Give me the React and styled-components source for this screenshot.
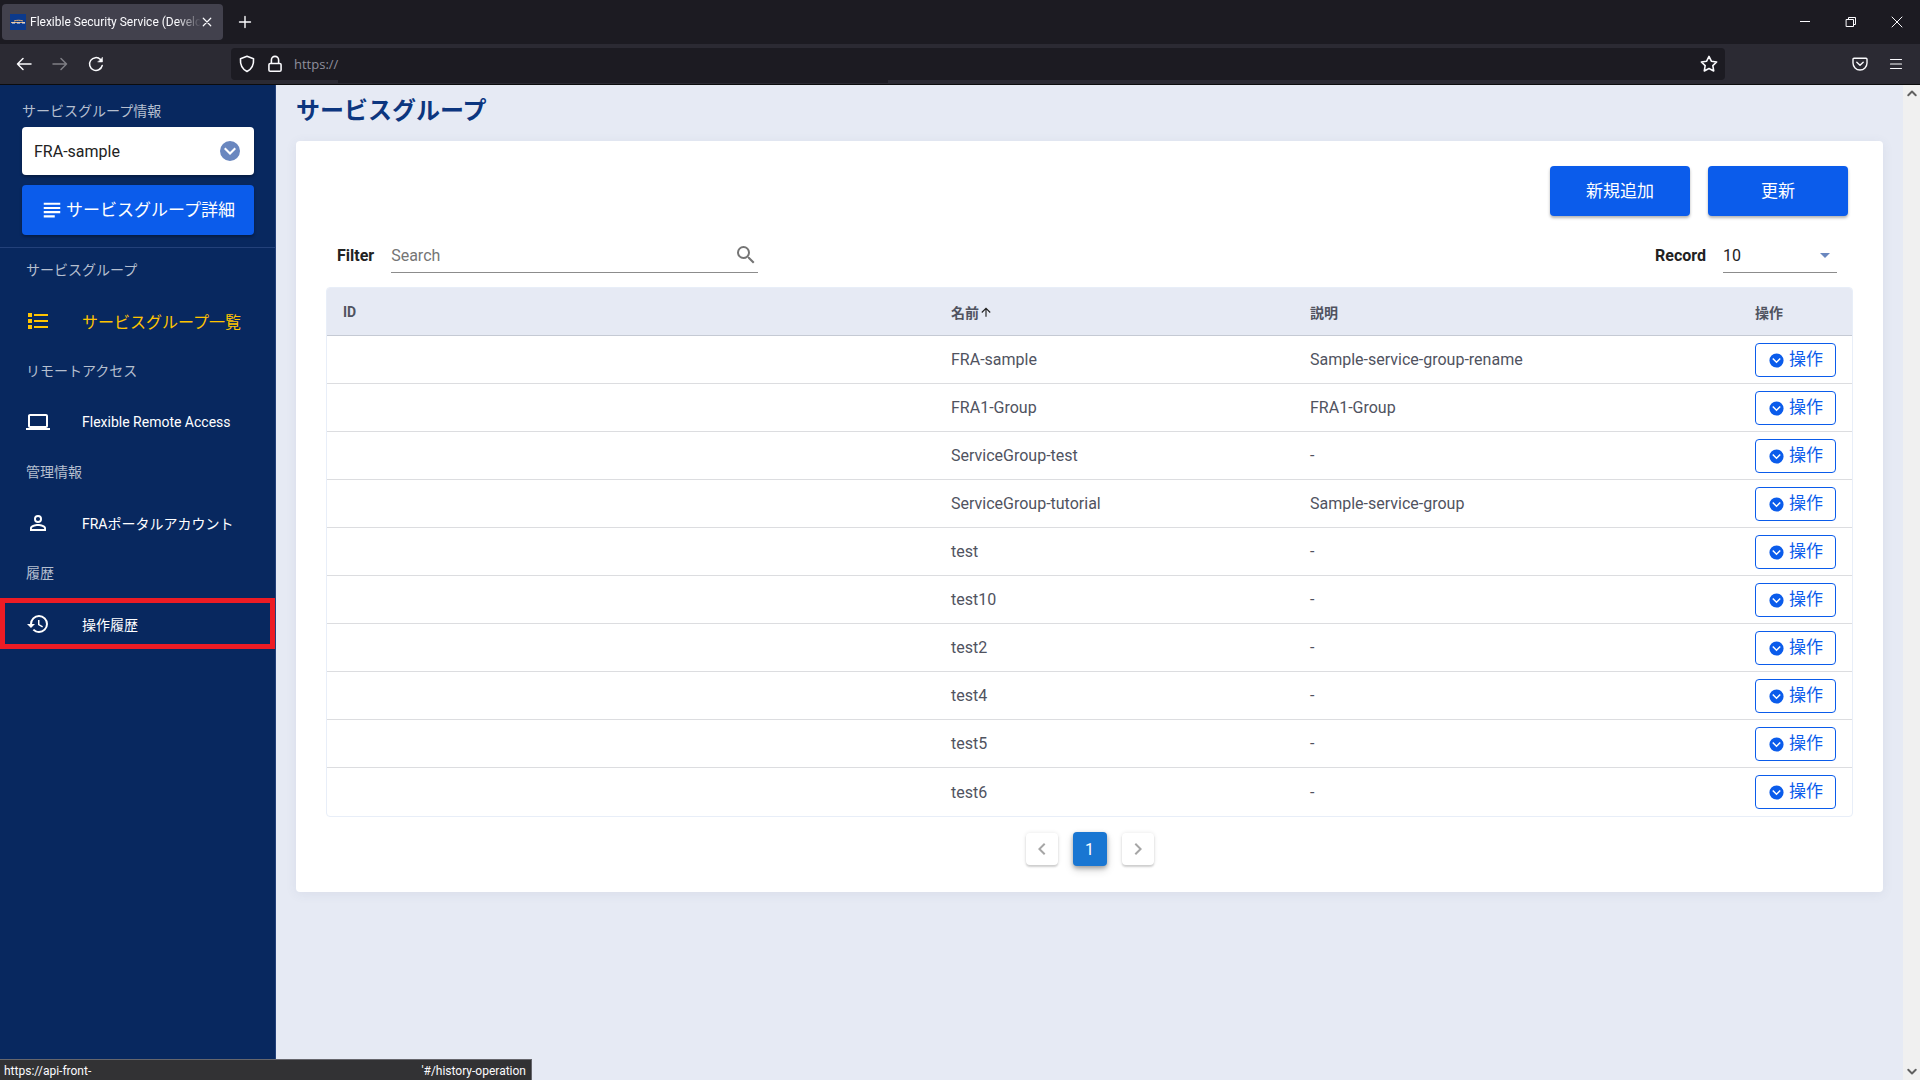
import { useState } from "react";
import styled, { createGlobalStyle } from "styled-components";

const services = [
  { name: "FRA-sample", description: "Sample-service-group-rename" },
  { name: "FRA1-Group", description: "FRA1-Group" },
  { name: "ServiceGroup-test", description: "-" },
  { name: "ServiceGroup-tutorial", description: "Sample-service-group" },
  { name: "test", description: "-" },
  { name: "test10", description: "-" },
  { name: "test2", description: "-" },
  { name: "test4", description: "-" },
  { name: "test5", description: "-" },
  { name: "test6", description: "-" },
];

const menu = [
  { heading: "サービスグループ", label: "サービスグループ一覧", icon: "list", active: true },
  { heading: "リモートアクセス", label: "Flexible Remote Access", icon: "laptop" },
  { heading: "管理情報", label: "FRAポータルアカウント", icon: "account" },
  { heading: "履歴", label: "操作履歴", icon: "history", marked: true },
];

const icons = {
  list: "M2 4h4v4H2V4zm6 1h14v2H8V5zM2 10h4v4H2v-4zm6 1h14v2H8v-2zm-6 5h4v4H2v-4zm6 1h14v2H8v-2z",
  laptop:
    "M4 6h16v10H4V6zm16 12c1.1 0 2-.9 2-2V6c0-1.1-.9-2-2-2H4c-1.1 0-2 .9-2 2v10c0 1.1.9 2 2 2H0v2h24v-2h-4z",
  account:
    "M12 13c-2.67 0-8 1.34-8 4v3h16v-3c0-2.66-5.33-4-8-4zm6.1 5.1H5.9V17c0-.64 3.13-2.1 6.1-2.1s6.1 1.46 6.1 2.1v1.1zM12 4a4 4 0 1 0 0 8 4 4 0 0 0 0-8zm0 6.1a2.1 2.1 0 1 1 0-4.2 2.1 2.1 0 0 1 0 4.2z",
  history:
    "M13.5 8H12v5l4.28 2.54.72-1.21-3.5-2.08V8M13 3a9 9 0 0 0-9 9H1l3.96 4.03L9 12H6a7 7 0 0 1 7-7 7 7 0 0 1 7 7 7 7 0 0 1-7 7c-1.93 0-3.68-.79-4.94-2.06l-1.42 1.42A8.896 8.896 0 0 0 13 21a9 9 0 0 0 9-9 9 9 0 0 0-9-9",
  subject: "M3 4h18v2.300H3V4zm0 4.600h18v2.300H3V8.600zm0 4.600h18v2.300H3v-2.300zm0 4.600h12v2.300H3v-2.300z",
  magnify:
    "M9.5 3A6.5 6.5 0 0 1 16 9.5c0 1.61-.59 3.09-1.56 4.23l.27.27h.79l5 5-1.5 1.5-5-5v-.79l-.27-.27A6.516 6.516 0 0 1 9.5 16 6.5 6.5 0 0 1 3 9.5 6.5 6.5 0 0 1 9.5 3m0 2C7 5 5 7 5 9.5S7 14 9.5 14 14 12 14 9.5 12 5 9.5 5z",
  arrowUp: "M13 20h-2V8l-5.5 5.5-1.42-1.42L12 4.16l7.92 7.92-1.42 1.42L13 8v12z",
  circleDown:
    "M12 2a10 10 0 1 0 0 20 10 10 0 0 0 0-20zM6 10l1.5-1.5 4.5 4.5 4.5-4.5L18 10l-6 6-6-6z",
  left: "M15.41 16.58L10.83 12l4.58-4.59L14 6l-6 6 6 6 1.41-1.42z",
  right: "M8.59 16.58L13.17 12 8.59 7.41 10 6l6 6-6 6-1.41-1.42z",
};

const GlobalStyle = createGlobalStyle`
  * {
    box-sizing: border-box;
  }
  body {
    margin: 0;
    font-family: Roboto, "Noto Sans CJK JP", sans-serif;
    font-size: 16px;
    color: #222;
  }
  button, input, select {
    font: inherit;
    margin: 0;
  }
  button {
    cursor: pointer;
  }
  svg {
    flex-shrink: 0;
  }
`;

const Page = styled.div`
  min-height: 100vh;
  display: flex;
  flex-direction: column;
  position: relative;
`;

const TabBar = styled.div`
  height: 44px;
  background: #1c1b22;
  display: flex;
  align-items: center;
  padding-left: 2px;
`;

const Tab = styled.div`
  width: 221px;
  height: 36px;
  border-radius: 4px;
  background: #42414d;
  color: #fbfbfe;
  display: flex;
  align-items: center;
  padding: 0 10px 0 8px;
`;

const TabTitle = styled.span`
  flex: 1;
  min-width: 0;
  margin-left: 4px;
  white-space: nowrap;
  font-size: 12px;
  mask-image: linear-gradient(to left, transparent, #000 24px);
`;

const ChromeButton = styled.button`
  width: ${(p) => p.$width || 36}px;
  height: 32px;
  padding: 0;
  border: 0;
  background: none;
  color: #fbfbfe;
  opacity: ${(p) => (p.disabled ? 0.4 : 1)};
  display: flex;
  align-items: center;
  justify-content: center;
`;

const WindowButtons = styled.div`
  margin-left: auto;
  display: flex;
`;

const NavBar = styled.div`
  height: 41px;
  background: #2b2a33;
  border-bottom: 1px solid #0c0c0d;
  display: flex;
  align-items: center;
  padding: 0 6px;
`;

const UrlBar = styled.div`
  flex: 1;
  height: 32px;
  margin: 0 117px;
  border-radius: 4px;
  background: #1c1b22;
  display: flex;
  align-items: center;
  gap: 10px;
  padding: 0 7px;
  color: #fbfbfe;
  position: relative;
  &::after {
    content: "";
    position: absolute;
    top: 32px;
    left: 107px;
    width: 550px;
    height: 3px;
    background: #1c1b22;
  }
`;

const UrlInput = styled.input`
  flex: 1;
  min-width: 0;
  border: 0;
  padding: 0;
  outline: 0;
  background: none;
  color: #8f8f9d;
  font: 13px "Open Sans", sans-serif;
`;

const Body = styled.div`
  flex: 1;
  display: flex;
`;

const Sidebar = styled.aside`
  width: 276px;
  flex-shrink: 0;
  background: #08285f;
  border-right: 1px solid #23417a;
`;

const GroupPanel = styled.div`
  padding: 16px 21px 12px 22px;
  border-bottom: 1px solid #23417a;
`;

const GroupLabel = styled.label`
  display: block;
  font-size: 14px;
  line-height: 20px;
  margin-bottom: 6px;
  color: #b5bfcf;
`;

const GroupSelectBox = styled.div`
  height: 48px;
  background: #fff;
  border-radius: 4px;
  display: flex;
  align-items: center;
  padding: 0 12px;
  color: #6a87bf;
  box-shadow: 0 2px 3px rgba(0, 0, 0, 0.3);
`;

const PlainSelect = styled.select`
  flex: 1;
  min-width: 0;
  appearance: none;
  border: 0;
  padding: 0;
  outline: 0;
  background: none;
  color: #222;
`;

const BlueButton = styled.button`
  height: 50px;
  width: ${(p) => p.$width || "140px"};
  padding: 0 0 4px;
  border: 0;
  border-radius: 4px;
  background: #0b5ceb;
  color: #fff;
  font-size: 17px;
  display: flex;
  align-items: center;
  justify-content: center;
  gap: 3px;
  box-shadow: 0 2px 3px rgba(0, 0, 0, 0.3);
  svg {
    margin-top: 4px;
  }
`;

const GroupDetail = styled(BlueButton)`
  margin-top: 10px;
`;

const MenuHeading = styled.h2`
  margin: 0;
  padding-left: 26px;
  font-size: 14px;
  font-weight: 400;
  line-height: 45px;
  color: #b5bfcf;
`;

const MenuItem = styled.a`
  height: 51px;
  margin: 2px 0 3px;
  border: 5px solid ${(p) => (p.$marked ? "#ed1c24" : "transparent")};
  padding-left: 21px;
  display: flex;
  align-items: center;
  gap: 32px;
  color: ${(p) => (p.$active ? "#ffc400" : "#fff")};
  font-size: ${(p) => (p.$active ? 16 : 14)}px;
  text-decoration: none;
`;

const Main = styled.main`
  flex: 1;
  min-width: 0;
  background: #e6eaf4;
  padding: 8px 20px;
`;

const Title = styled.h1`
  margin: 0 0 12px;
  font-size: 24px;
  line-height: 36px;
  font-weight: 700;
  color: #0c367f;
`;

const Card = styled.section`
  background: #fff;
  border-radius: 4px;
  padding: 25px 30px 26px;
  box-shadow: 0 2px 12px rgba(60, 80, 120, 0.08);
`;

const Actions = styled.div`
  display: flex;
  justify-content: flex-end;
  gap: 18px;
  padding-right: 5px;
`;

const Controls = styled.div`
  display: flex;
  justify-content: space-between;
  margin: 22px 16px 14px 11px;
`;

const Control = styled.div`
  display: flex;
  align-items: center;
  gap: 17px;
`;

const ControlLabel = styled.label`
  font-weight: 700;
`;

const Underlined = styled.div`
  width: ${(p) => p.$width}px;
  height: 35px;
  border-bottom: 1px solid #8c8c8c;
  display: flex;
  align-items: center;
  color: ${(p) => p.$color};
`;

const SearchInput = styled.input`
  flex: 1;
  min-width: 0;
  border: 0;
  padding: 0;
  outline: 0;
  background: none;
  &::placeholder {
    color: #757575;
  }
`;

const IconButton = styled.button`
  border: 0;
  padding: 0;
  background: none;
  color: inherit;
  display: flex;
`;

const TableFrame = styled.div`
  border: 1px solid #e8eef8;
  border-radius: 4px;
  overflow: hidden;
`;

const Table = styled.table`
  width: 100%;
  table-layout: fixed;
  border-spacing: 0;
`;

const Column = styled.col`
  width: ${(p) => (p.$width ? `${p.$width}px` : "auto")};
`;

const Th = styled.th`
  height: 48px;
  padding: 0 16px;
  text-align: left;
  font-size: 14px;
  color: #50535f;
  background: #e6eaf4;
  border-bottom: 1px solid #c5cad4;
`;

const SortButton = styled(IconButton)`
  align-items: center;
  font-weight: 700;
  svg {
    color: #222;
  }
`;

const Td = styled.td`
  height: 48px;
  padding: 0 16px;
  color: #50535f;
  border-bottom: 1px solid #dcdde0;
  tr:last-child & {
    border-bottom: 0;
  }
`;

const OpButton = styled.button`
  width: 81px;
  height: 34px;
  padding: 0 0 2px;
  border: 1px solid #0b5ceb;
  border-radius: 4px;
  background: #fff;
  color: #0b5ceb;
  font-size: 17px;
  line-height: 24px;
  display: flex;
  align-items: center;
  justify-content: center;
  gap: 4px;
  svg {
    margin-top: 3px;
  }
`;

const Pager = styled.nav`
  display: flex;
  justify-content: center;
  align-items: center;
  gap: 15px;
  margin-top: 15px;
`;

const PageButton = styled.button`
  width: ${(p) => (p.$current ? 34 : 32)}px;
  height: ${(p) => (p.$current ? 34 : 32)}px;
  padding: 0;
  border: 0;
  border-radius: 4px;
  display: flex;
  align-items: center;
  justify-content: center;
  background: ${(p) => (p.$current ? "#1976d2" : "#fff")};
  color: ${(p) => (p.$current ? "#fff" : "#a6a6a6")};
  box-shadow: ${(p) =>
    p.$current
      ? "0 2px 4px rgba(0, 0, 0, 0.3), 0 4px 8px rgba(0, 0, 0, 0.16)"
      : "0 2px 2px rgba(0, 0, 0, 0.16), 0 0 4px rgba(0, 0, 0, 0.1)"};
`;

const Scrollbar = styled.div`
  width: 17px;
  flex-shrink: 0;
  background: #f0f0f0;
  color: #606060;
  display: flex;
  flex-direction: column;
  justify-content: space-between;
  align-items: center;
  padding: 2px 0;
`;

/* Link target shown over the lower left corner of the page */
const StatusBar = styled.div`
  position: absolute;
  left: 0;
  bottom: 0;
  width: 532px;
  height: 21px;
  padding: 1px 5px 0 4px;
  background: #323234;
  border: 1px solid #66666c;
  border-width: 1px 1px 0 0;
  color: #fbfbfe;
  display: flex;
  align-items: center;
  justify-content: space-between;
  font-size: 12px;
`;

function Icon({ name, size = 24 }) {
  return (
    <svg width={size} height={size} viewBox="0 0 24 24" fill="currentColor" fillRule="evenodd" aria-hidden="true">
      <path d={icons[name]} />
    </svg>
  );
}

function LineIcon({ size = 16, width = 1.4, children }) {
  return (
    <svg
      width={size}
      height={size}
      viewBox="0 0 16 16"
      fill="none"
      stroke="currentColor"
      strokeWidth={width}
      strokeLinecap="round"
      strokeLinejoin="round"
      aria-hidden="true"
    >
      {children}
    </svg>
  );
}

function BrowserChrome() {
  return (
    <header>
      <TabBar>
        <Tab>
          <svg width="16" height="16" viewBox="0 0 16 16" aria-hidden="true">
            <path fill="#0c3a8c" d="M0 0h16v16H0z" />
            <path d="M1 8.5h14M4 7c3-1 6-1 9 0" stroke="#e3b27a" fill="none" />
            <path d="M2 9h3m2 0h3m2 0h3" stroke="#e8e8f4" />
          </svg>
          <TabTitle>Flexible Security Service (Develo</TabTitle>
          <ChromeButton $width={12} aria-label="Close tab">
            <LineIcon size={12} width={1.6}><path d="M3 3l10 10M13 3L3 13" /></LineIcon>
          </ChromeButton>
        </Tab>
        <ChromeButton $width={44} aria-label="New tab">
          <LineIcon><path d="M8 2.500v11M2.500 8h11" /></LineIcon>
        </ChromeButton>
        <WindowButtons>
          <ChromeButton $width={46} aria-label="Minimize">
            <LineIcon width={1}><path d="M3 7.5h10" strokeLinecap="butt" /></LineIcon>
          </ChromeButton>
          <ChromeButton $width={46} aria-label="Restore">
            <LineIcon width={1}>
              <path d="M3.500 5.500h7v7h-7zM5.500 5.500v-2h7v7h-2" strokeLinejoin="miter" />
            </LineIcon>
          </ChromeButton>
          <ChromeButton $width={46} aria-label="Close">
            <LineIcon width={1}><path d="M3 3l10 10M13 3L3 13" /></LineIcon>
          </ChromeButton>
        </WindowButtons>
      </TabBar>
      <NavBar>
        <ChromeButton aria-label="Back">
          <LineIcon width={1.5}><path d="M1.500 8H15M7 2.500L1.500 8 7 13.500" /></LineIcon>
        </ChromeButton>
        <ChromeButton disabled aria-label="Forward">
          <LineIcon width={1.5}><path d="M1 8h13.500M9 2.500L14.500 8 9 13.500" /></LineIcon>
        </ChromeButton>
        <ChromeButton aria-label="Reload">
          <LineIcon width={1.5}>
            <path d="M14.200 9.500A6.400 6.400 0 1 1 12.500 3.500l1 1" />
            <path d="M14.500 1.500v4.500H10z" fill="currentColor" strokeWidth="0.500" />
          </LineIcon>
        </ChromeButton>
        <UrlBar>
          <LineIcon size={18}>
            <path d="M8 1.200l5.800 2.200c.4 5-1.500 9-5.800 11.300C3.700 12.400 1.800 8.400 2.200 3.400z" />
          </LineIcon>
          <LineIcon size={18}>
            <path d="M3.800 7.500h8.400a1.200 1.200 0 0 1 1.200 1.200v4.600a1.200 1.200 0 0 1-1.200 1.200H3.800a1.200 1.200 0 0 1-1.200-1.200V8.700a1.200 1.200 0 0 1 1.200-1.200zM4.800 7.500V4.400a3.200 3.200 0 0 1 6.400 0v3.100" />
          </LineIcon>
          <UrlInput aria-label="Address" defaultValue="https://" />
          <LineIcon size={18}>
            <path d="M8 1.200l2.100 4.300 4.700.7-3.400 3.300.8 4.700L8 12l-4.200 2.200.8-4.700L1.200 6.200l4.700-.7z" />
          </LineIcon>
        </UrlBar>
        <ChromeButton aria-label="Save to Pocket">
          <LineIcon>
            <path d="M2 2.200h12a1 1 0 0 1 1 1V7A7 7 0 0 1 1 7V3.200a1 1 0 0 1 1-1zM4.800 6.200L8 9.200l3.200-3" />
          </LineIcon>
        </ChromeButton>
        <ChromeButton aria-label="Menu">
          <LineIcon width={1.2}><path d="M2.500 3.500h11M2.500 8h11M2.500 12.500h11" /></LineIcon>
        </ChromeButton>
      </NavBar>
    </header>
  );
}

function SideMenu() {
  return (
    <Sidebar>
      <GroupPanel>
        <GroupLabel htmlFor="group">サービスグループ情報</GroupLabel>
        <GroupSelectBox>
          <PlainSelect id="group">
            <option>FRA-sample</option>
          </PlainSelect>
          <Icon name="circleDown" />
        </GroupSelectBox>
        <GroupDetail $width="100%">
          <Icon name="subject" size={22} />
          サービスグループ詳細
        </GroupDetail>
      </GroupPanel>
      <nav>
        {menu.map((item) => (
          <div key={item.heading}>
            <MenuHeading>{item.heading}</MenuHeading>
            <MenuItem href={`#${item.icon}`} $active={item.active} $marked={item.marked}>
              <Icon name={item.icon} />
              {item.label}
            </MenuItem>
          </div>
        ))}
      </nav>
    </Sidebar>
  );
}

function ServiceTable({ rows }) {
  return (
    <TableFrame>
      <Table>
        <colgroup>
          <Column />
          <Column $width={359} />
          <Column $width={445} />
          <Column $width={113} />
        </colgroup>
        <thead>
          <tr>
            <Th>ID</Th>
            <Th>
              <SortButton>
                名前
                <Icon name="arrowUp" size={14} />
              </SortButton>
            </Th>
            <Th>説明</Th>
            <Th>操作</Th>
          </tr>
        </thead>
        <tbody>
          {rows.map((row) => (
            <tr key={row.name}>
              <Td />
              <Td>{row.name}</Td>
              <Td>{row.description}</Td>
              <Td>
                <OpButton>
                  <Icon name="circleDown" size={17} />
                  操作
                </OpButton>
              </Td>
            </tr>
          ))}
        </tbody>
      </Table>
    </TableFrame>
  );
}

export default function App() {
  const [search, setSearch] = useState("");
  const rows = services.filter((item) => item.name.includes(search));

  return (
    <Page>
      <GlobalStyle />
      <BrowserChrome />
      <Body>
        <SideMenu />
        <Main>
          <Title>サービスグループ</Title>
          <Card>
            <Actions>
              <BlueButton>新規追加</BlueButton>
              <BlueButton>更新</BlueButton>
            </Actions>
            <Controls>
              <Control>
                <ControlLabel htmlFor="filter">Filter</ControlLabel>
                <Underlined $width={367} $color="#757575">
                  <SearchInput
                    id="filter"
                    placeholder="Search"
                    value={search}
                    onChange={(e) => setSearch(e.target.value)}
                  />
                  <IconButton aria-label="Search">
                    <Icon name="magnify" />
                  </IconButton>
                </Underlined>
              </Control>
              <Control>
                <ControlLabel htmlFor="record">Record</ControlLabel>
                <Underlined $width={114} $color="#6a87bf">
                  <PlainSelect id="record">
                    <option>10</option>
                  </PlainSelect>
                  <svg width="24" height="24" viewBox="0 0 24 24" fill="currentColor" aria-hidden="true">
                    <path d="M7 10l5 5 5-5H7z" />
                  </svg>
                </Underlined>
              </Control>
            </Controls>
            <ServiceTable rows={rows} />
            <Pager>
              <PageButton disabled aria-label="Previous page">
                <Icon name="left" />
              </PageButton>
              <PageButton $current>1</PageButton>
              <PageButton disabled aria-label="Next page">
                <Icon name="right" />
              </PageButton>
            </Pager>
          </Card>
        </Main>
        <Scrollbar>
          <LineIcon size={12} width={2.6}><path d="M3 11l5-5 5 5" /></LineIcon>
          <LineIcon size={12} width={2.6}><path d="M3 5l5 5 5-5" /></LineIcon>
        </Scrollbar>
      </Body>
      <StatusBar>
        <span>https://api-front-</span>
        <span>'#/history-operation</span>
      </StatusBar>
    </Page>
  );
}
